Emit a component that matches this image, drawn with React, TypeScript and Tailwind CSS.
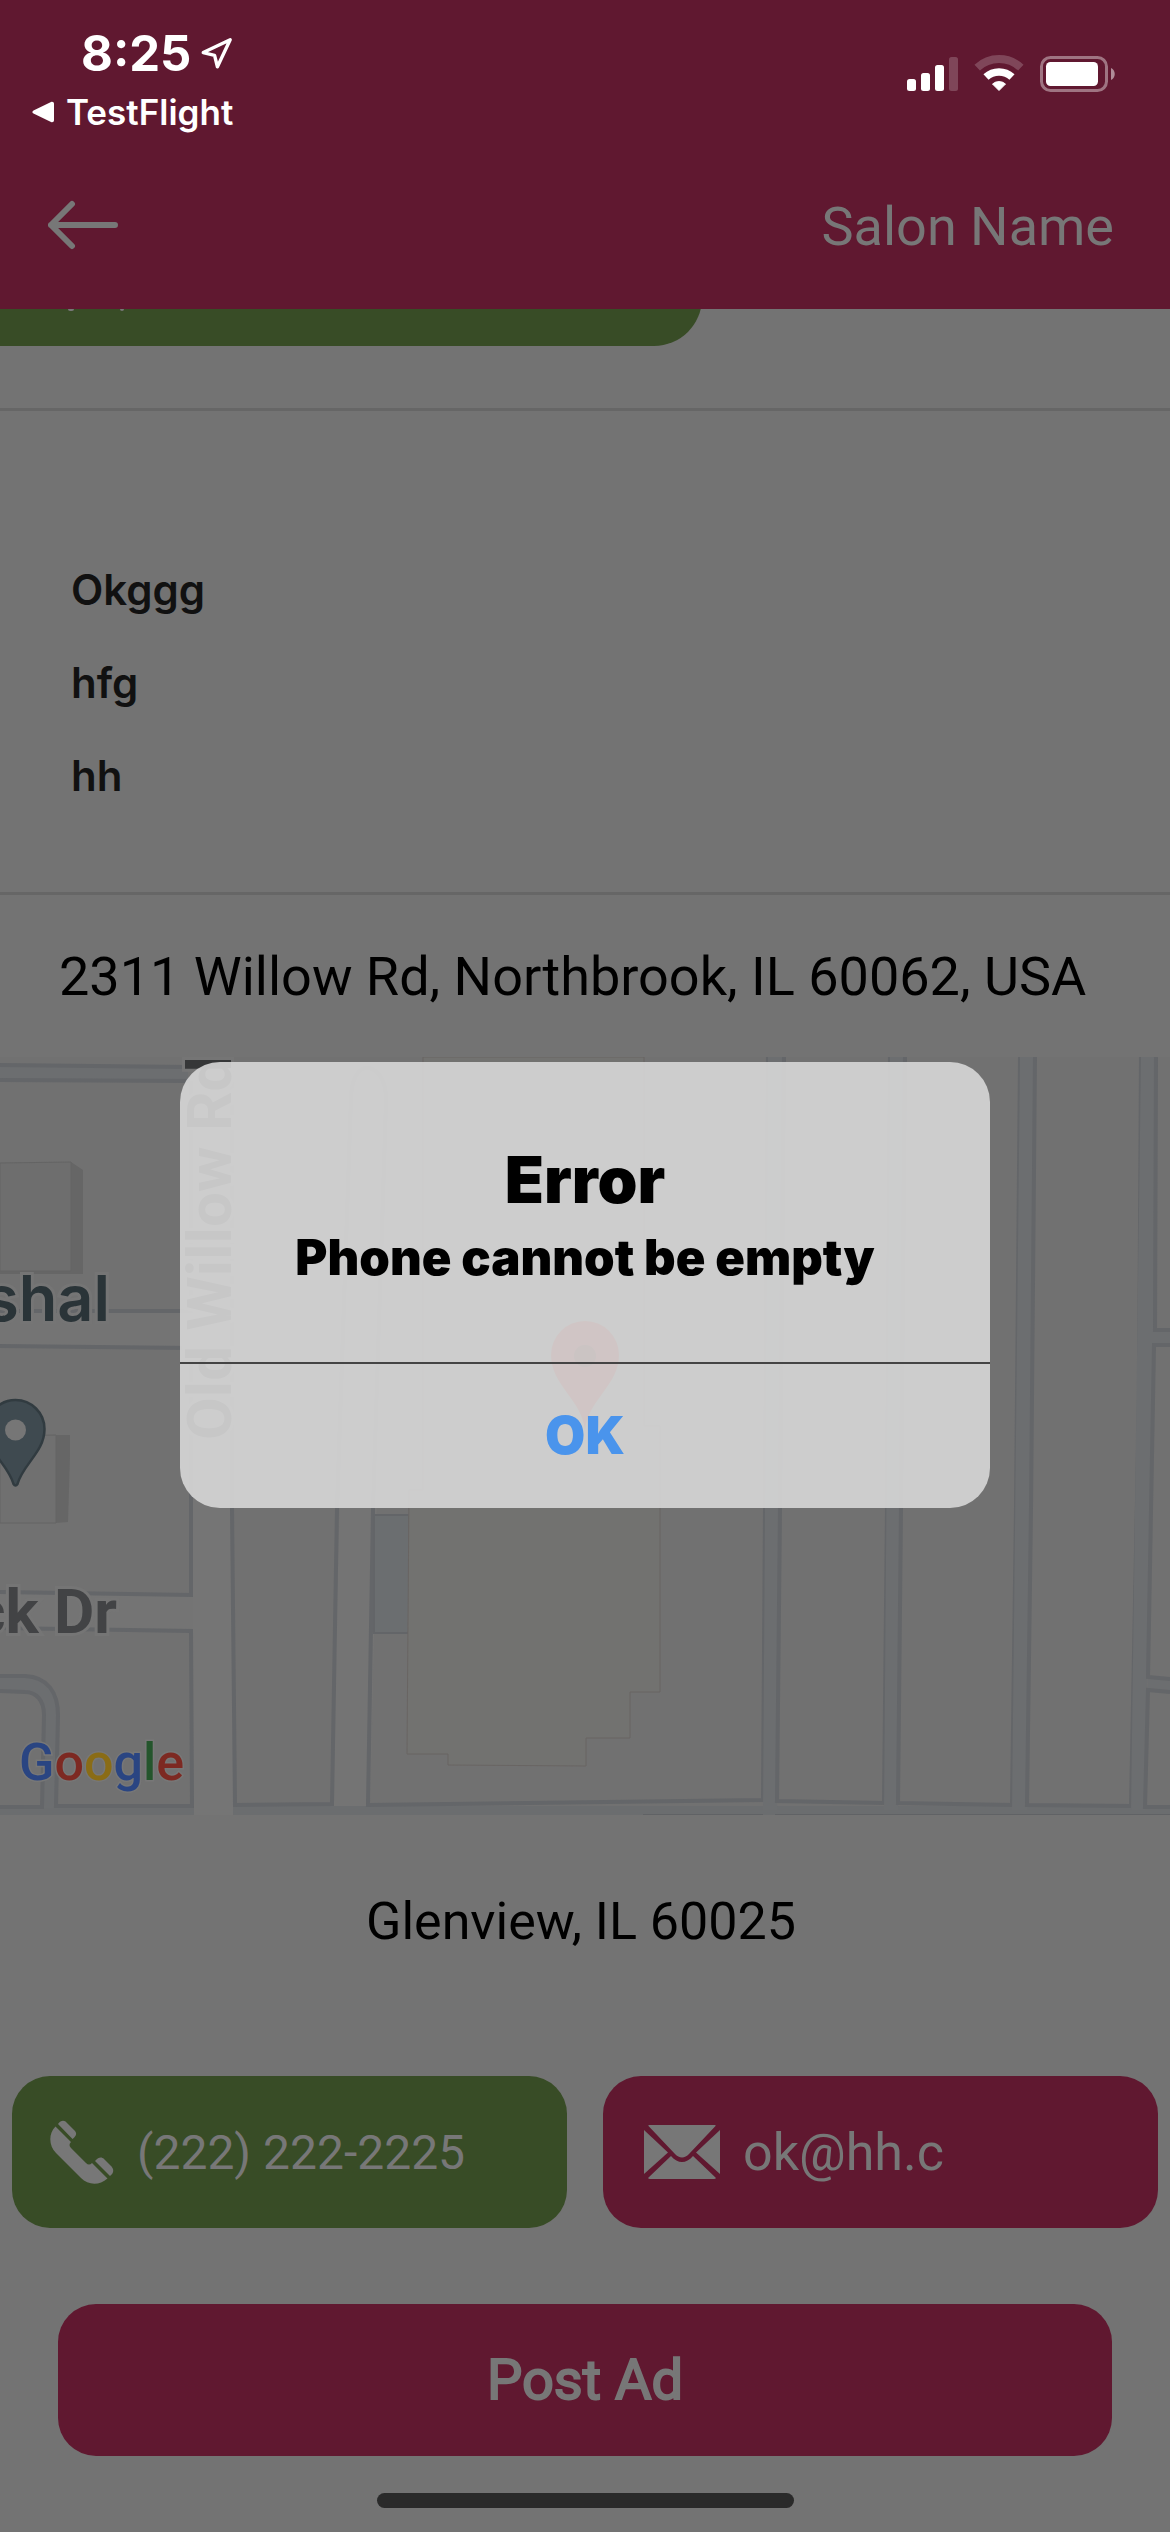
import React from "react";

function StatusBar() {
  return (
    <div className="flex h-[141px] items-start justify-between pr-[54px] font-['Inter',sans-serif] text-white">
      <div className="flex flex-col gap-[10px] pt-[26px]">
        <div className="flex items-center pl-[81px]">
          <span className="text-[49px] leading-[56px] font-bold">8:25</span>
          <svg
            aria-hidden="true"
            viewBox="0 0 24 24"
            className="ml-2 size-[34px]"
            fill="none"
            stroke="currentColor"
            strokeWidth="2.4"
            strokeLinejoin="round"
          >
            <polygon points="3 11 22 2 13 21 11 13 3 11" />
          </svg>
        </div>
        <a href="#testflight" className="flex items-center gap-3 pl-8 text-[35px] leading-10 font-semibold">
          <svg aria-hidden="true" viewBox="0 0 22 22" className="size-[22px]" fill="currentColor">
            <path d="M1.5 9.4 19 1c1.6-.7 3 .2 3 2v16c0 1.800-1.400 2.700-3 2L1.500 12.600C0 11.800 0 10.200 1.500 9.400Z" />
          </svg>
          TestFlight
        </a>
      </div>
      <div className="flex items-center gap-4 pt-[55px]">
        <svg role="img" aria-label="Signal" viewBox="0 0 51 38" className="h-[38px] w-[51px]" fill="currentColor">
          <rect x="0" y="24" width="9" height="12" rx="2.500" />
          <rect x="14" y="18" width="9" height="18" rx="2.500" />
          <rect x="28" y="10" width="9" height="26" rx="2.500" />
          <rect x="42" y="2" width="9" height="34" rx="2.500" fillOpacity=".2" />
        </svg>
        <svg role="img" aria-label="Wi-Fi" viewBox="0 0 50 38" className="h-[38px] w-[50px]" fill="none" stroke="currentColor">
          <path d="M3.200 12.600A32 32 0 0 1 46.800 12.600" strokeWidth="8" strokeOpacity=".2" />
          <path d="M12 22.100A19 19 0 0 1 38 22.100" strokeWidth="7.500" />
          <path d="M25 35.500 18.500 29A10 10 0 0 1 31.500 29Z" fill="currentColor" strokeWidth="1" />
        </svg>
        <svg role="img" aria-label="Battery" viewBox="0 0 76 38" className="h-[38px] w-[76px]">
          <rect x="1.500" y="2.500" width="65" height="33" rx="9" fill="none" stroke="currentColor" strokeOpacity=".4" strokeWidth="3" />
          <rect x="6" y="7" width="52" height="24" rx="4.500" fill="currentColor" />
          <path d="M71 13c5 2 5 10 0 12Z" fill="currentColor" fillOpacity=".5" />
        </svg>
      </div>
    </div>
  );
}

function Road({ fill, edge }: { fill?: string; edge: string }) {
  return (
    <>
      {fill && <path d={fill} fill="#6c6e70" />}
      <path d={edge} fill="none" stroke="#646669" strokeWidth="4" />
    </>
  );
}

function MapView() {
  return (
    <svg role="img" aria-label="Map" viewBox="0 1057 1170 758" className="block h-auto w-full">
      <rect y="1057" width="1170" height="758" fill="#717171" />

      {/* main streets */}
      <path d="M193 1057H233V1815H193Z" fill="#757575" />
      <path d="M0 1312H193V1347H0Z" fill="#747474" />
      <path d="M0 1592 193 1595V1630L0 1628Z" fill="#747474" />
      <path d="M351 1100C351 1080 358 1068 367 1068S386 1078 386 1100L370 1815H331Z" fill="#747474" />

      {/* narrow lanes */}
      <path d="M0 1807H194V1815H0Z M233 1806H1170V1815H233Z" fill="#6b6d6f" />
      <Road fill="M0 1065 188 1066V1081L0 1080Z" edge="M0 1065 188 1067 M0 1080 190 1081" />
      <Road
        fill="M0 1676H25C48 1677 58 1693 58 1715L56 1808H42L44 1715C44 1700 36 1692 25 1692L0 1691Z"
        edge="M0 1807H42L44 1715C44 1700 36 1692 25 1692L0 1691 M0 1676H25C48 1677 58 1693 58 1715L56 1806H192L191 1631 0 1628"
      />
      <Road edge="M191 1081V1311H0 M0 1346 191 1348V1595L0 1592" />
      <Road edge="M232 1057V1509L235 1805 332 1804 337 1509 351 1100C351 1080 358 1068 367 1068S386 1078 386 1100L373 1509 368 1805 763 1800 765 1509 768 1057" />
      <Road fill="M768 1057H784L777 1810H763Z" edge="M784 1057 780 1509 777 1801 884 1803 887 1509 890 1057" />
      <Road fill="M890 1057H905L898 1810H884Z" edge="M905 1057 901 1509 898 1803 1012 1805 1016 1509 1020 1057" />
      <Road fill="M1020 1057H1035L1027 1810H1012Z" edge="M1035 1057 1031 1509 1027 1805 1131 1806 1139 1400 1141 1057" />
      <Road
        fill="M1141 1057H1156L1154 1345 1145 1810H1131Z M1154 1331H1170V1344H1154Z M1148 1677 1170 1679V1692L1148 1690Z"
        edge="M1156 1057 1155 1330H1170 M1170 1345H1154L1148 1677 1170 1679 M1170 1692 1148 1690 1145 1807H1170"
      />
      <path d="M643 1815H763 M775 1815H1170" stroke="#606265" strokeWidth="2" />

      {/* buildings */}
      <path d="M71 1162 83 1170V1274H0V1271H71Z" fill="#666666" />
      <path d="M0 1163 71 1162V1271H0Z" fill="#6e6e6e" stroke="#646464" />
      <path d="M45 1435H70V1455L68 1522 55 1523Z" fill="#666666" />
      <path d="M0 1436 56 1435V1523H0Z" fill="#707070" stroke="#646464" />
      <path d="M374 1515H409V1633H374Z" fill="#6b6e70" stroke="#636568" strokeWidth="2" />
      <path
        d="M423 1057H644V1426H660V1692H630V1738H586V1766L448 1765V1754H407L409 1490H423Z"
        fill="#727270"
        stroke="#696563"
      />

      {/* labels */}
      <g fontFamily="Roboto, sans-serif" fontWeight="700" fontSize="62" stroke="#757575" strokeWidth="6" paintOrder="stroke">
        <text x="110" y="1321" textAnchor="end" fontFamily="Inter, sans-serif" fontWeight="600" fontSize="63" fill="#2a3438">
          shal
        </text>
        <text x="117" y="1633" textAnchor="end" fill="#424345">
          ck Dr
        </text>
        <text transform="translate(231 1440) rotate(-90)" fill="#363738">
          Old Willow Rd
        </text>
      </g>

      {/* pins */}
      <path
        d="M15.500 1400A29 29 0 0 1 44.500 1429C44.500 1452 23 1464 17.500 1484Q15.500 1487 13.500 1484C8 1464-13.500 1452-13.500 1429A29 29 0 0 1 15.500 1400Z"
        fill="#3f4a50"
        stroke="#313b40"
        strokeWidth="2.500"
      />
      <circle cx="15.500" cy="1430" r="10.500" fill="#767676" />
      <path d="M585 1321A34 34 0 0 1 619 1355C619 1385 588 1400 585 1430C582 1400 551 1385 551 1355A34 34 0 0 1 585 1321Z" fill="#8c2722" />
      <circle cx="585" cy="1356" r="11" fill="#5a1512" />

      <text x="19" y="1780" fontFamily="Roboto, sans-serif" fontSize="52" fontWeight="500" stroke="#777777" strokeWidth="3" paintOrder="stroke">
        <tspan fill="#2a4582">G</tspan>
        <tspan fill="#7d2922">o</tspan>
        <tspan fill="#8a6c16">o</tspan>
        <tspan fill="#2a4582">g</tspan>
        <tspan fill="#24552c">l</tspan>
        <tspan fill="#7d2922">e</tspan>
      </text>
    </svg>
  );
}

function PhoneIcon() {
  return (
    <svg aria-hidden="true" viewBox="0 0 64 64" className="size-16 shrink-0" fill="currentColor">
      <path d="M5.500 6.500 21 22C19 24 19 26 21 28L36 43C38 45 40 45 42 43L57.500 58.500C49 66 38 65 31 58L6 33C-1 26-2 14 5.500 6.500Z" />
      <path d="M8 4C11 0 14.500 0 17 3L25 11C27 13.500 26.500 16 22.500 19Z" />
      <path d="M45 41C48.500 37 51.500 36.500 54 39L61.500 46.500C64 49.500 64 53 60 56Z" />
    </svg>
  );
}

function MailIcon() {
  return (
    <svg aria-hidden="true" viewBox="0 0 76 54" className="h-[54px] w-[76px] shrink-0" fill="currentColor">
      <path d="M5 0H71Q72 0 71.500 1L45 29C41 33.500 35 33.500 31 29L4.500 1Q4 0 5 0Z" />
      <path d="M0 5 24 27.500 0 49Q0 49 0 48Z" />
      <path d="M76 5 52 27.500 76 49Z" />
      <path d="M27 31C34 39 42 39 49 31L72 53Q71.500 54 70 54H6Q4.500 54 4 53Z" />
    </svg>
  );
}

export default function App() {
  return (
    <div className="relative min-h-screen bg-[#737373] font-['Roboto',sans-serif]">
      <header className="bg-[#601830] text-[#777777]">
        <StatusBar />
        <div className="flex h-[168px] items-center justify-between pr-14 pl-12">
          <button type="button" aria-label="Back">
            <svg
              aria-hidden="true"
              viewBox="0 0 70 50"
              className="h-[50px] w-[70px]"
              fill="none"
              stroke="currentColor"
              strokeWidth="6"
              strokeLinecap="round"
              strokeLinejoin="round"
            >
              <path d="M3 25H67M24 4 3 25l21 21" />
            </svg>
          </button>
          <h1 className="pt-1 text-[54px] leading-[64px]">Salon Name</h1>
        </div>
      </header>

      <main>
        <section className="border-b-[3px] border-[#666666] pb-[62px]">
          <div className="flex h-[37px] items-end overflow-hidden">
            <div className="flex h-[152px] w-3/5 shrink-0 gap-[46px] rounded-r-[48px] bg-[#384c26] pt-[115px] pl-[68px]">
              <span className="h-0.5 w-1.5 rounded-b-full bg-[#777777]" />
              <span className="h-0.5 w-1 rounded-b-full bg-[#777777]" />
            </div>
          </div>
        </section>

        <section className="border-b-[3px] border-[#666666] px-[71px] pt-[132px] pb-[70px] font-['Inter',sans-serif] text-[42px] leading-[93px] font-semibold text-[#111111]">
          <p>Okggg</p>
          <p>hfg</p>
          <p>hh</p>
        </section>

        <p className="pt-[50px] pr-9 pb-12 pl-[59px] text-[54px] leading-[64px] text-black">
          2311 Willow Rd, Northbrook, IL 60062, USA
        </p>

        <MapView />

        <p className="pt-[77px] pr-2 text-center text-[52px] leading-[60px] text-black">Glenview, IL 60025</p>

        <div className="mt-[124px] grid grid-cols-2 gap-9 px-3 text-[#777777]">
          <a href="tel:+12222222225" className="flex h-[152px] items-center gap-[23px] rounded-[38px] bg-[#384c26] pl-[38px]">
            <PhoneIcon />
            <span className="pt-0.5 text-[48px]">(222) 222-2225</span>
          </a>
          <a href="mailto:ok@hh.c" className="flex h-[152px] items-center gap-[23px] rounded-[38px] bg-[#601830] pl-[41px]">
            <MailIcon />
            <span className="pt-0.5 text-[52px]">ok@hh.c</span>
          </a>
        </div>

        <div className="px-[58px] pt-[76px] pb-[37px]">
          <button
            type="button"
            className="h-[152px] w-full rounded-[38px] bg-[#601830] text-[56px] text-[#777777] [-webkit-text-stroke:2px_#777777]"
          >
            Post Ad
          </button>
        </div>
      </main>

      <div className="mx-auto h-[15px] w-[417px] rounded-full bg-[#2a2a2a]" />
      <div className="h-6" />

      <div className="absolute inset-0 flex items-center justify-center pt-[38px]">
        <div
          role="alertdialog"
          aria-modal="true"
          aria-labelledby="error-title"
          aria-describedby="error-text"
          className="w-[810px] overflow-hidden rounded-[40px] bg-[#d7d7d7]/90 text-center font-['Inter',sans-serif] font-black text-black"
        >
          <div className="pt-[80px] pb-[72px]">
            <h2 id="error-title" className="text-[64px] leading-[76px]">
              Error
            </h2>
            <p id="error-text" className="pt-2 text-[49px] leading-[64px]">
              Phone cannot be empty
            </p>
          </div>
          <button type="button" className="h-[146px] w-full border-t-2 border-[#444444] text-[52px] text-[#4a94ec]">
            OK
          </button>
        </div>
      </div>
    </div>
  );
}
